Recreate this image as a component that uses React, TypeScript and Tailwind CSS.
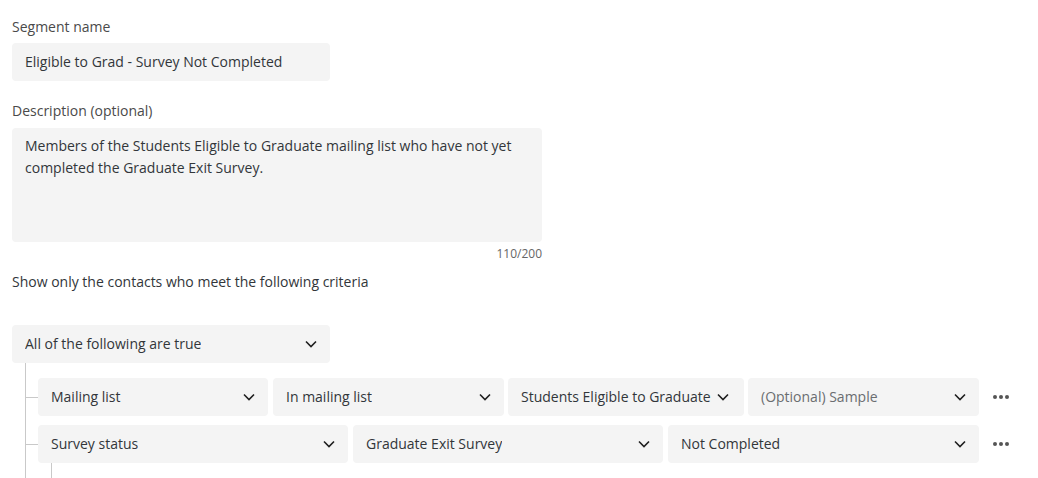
const font = { fontFamily: '"Open Sans", "Liberation Sans", sans-serif' };

function Chevron() {
  return (
    <svg width="12" height="8" viewBox="0 0 12 8" className="shrink-0">
      <path d="M1 1.5 L6 6.5 L11 1.5" fill="none" stroke="#1f1f1f" strokeWidth="1.6" />
    </svg>
  );
}

function Select({ label, width, placeholder, inline }: { label: string; width: number; placeholder?: boolean; inline?: boolean }) {
  return (
    <div
      className={`flex h-[38px] shrink-0 items-center rounded-[4px] bg-[#f4f4f4] pb-px pl-[13px] pr-[13px] text-[14px] leading-5 ${inline ? 'gap-[6px]' : 'justify-between'} ${placeholder ? 'text-[#6a6d70]' : 'text-[#32363a]'}`}
      style={{ width }}
    >
      <span className="truncate">{label}</span>
      <Chevron />
    </div>
  );
}

function Dots() {
  return (
    <div className="ml-[14px] flex items-center gap-[2px]">
      <span className="h-[4px] w-[4px] rounded-full bg-[#555]" />
      <span className="h-[4px] w-[4px] rounded-full bg-[#555]" />
      <span className="h-[4px] w-[4px] rounded-full bg-[#555]" />
    </div>
  );
}

export default function App() {
  return (
    <div className="h-[478px] w-[1038px] overflow-hidden bg-white pl-3 pt-[17px] text-[#32363a]" style={font}>
      <div className="h-5 text-[14px] leading-5 text-[#4a4a4a]">Segment name</div>
      <div className="mt-[6px] flex h-[38px] w-[318px] items-center rounded-[4px] bg-[#f4f4f4] px-[13px] pb-px text-[14px] leading-5">
        Eligible to Grad - Survey Not Completed
      </div>

      <div className="mt-5 h-5 text-[14px] leading-5 text-[#4a4a4a]">Description (optional)</div>
      <div className="mt-[7px] h-[114px] w-[530px] rounded-[4px] bg-[#f4f4f4] px-[13px] pt-[7px] text-[14px] leading-[22px]">
        Members of the Students Eligible to Graduate mailing list who have not yet completed the Graduate Exit Survey.
      </div>
      <div className="mt-1 w-[530px] text-right text-[12px] leading-4 text-[#666]">110/200</div>

      <div className="mt-[10px] h-5 text-[14px] leading-5">Show only the contacts who meet the following criteria</div>

      <div className="mt-[33px]">
        <Select label="All of the following are true" width={318} />
      </div>

      <div className="ml-[13px] flex flex-col gap-[9px] border-l border-[#c9c9c9] pt-[15px] pb-[20px]">
        <div className="flex items-center">
          <div className="h-px w-[12px] bg-[#c9c9c9]" />
          <Select label="Mailing list" width={230} />
          <div className="ml-[5px]"><Select label="In mailing list" width={231} /></div>
          <div className="ml-[4px]"><Select label="Students Eligible to Graduate" width={236} inline /></div>
          <div className="ml-[4px]"><Select label="(Optional) Sample" width={231} placeholder /></div>
          <Dots />
        </div>
        <div className="relative flex items-center">
          <div className="h-px w-[12px] bg-[#c9c9c9]" />
          <Select label="Survey status" width={310} />
          <div className="ml-[5px]"><Select label="Graduate Exit Survey" width={310} /></div>
          <div className="ml-[5px]"><Select label="Not Completed" width={311} /></div>
          <Dots />
          <div className="absolute left-[25px] top-[38px] h-[20px] w-px bg-[#c9c9c9]" />
        </div>
      </div>
    </div>
  );
}
